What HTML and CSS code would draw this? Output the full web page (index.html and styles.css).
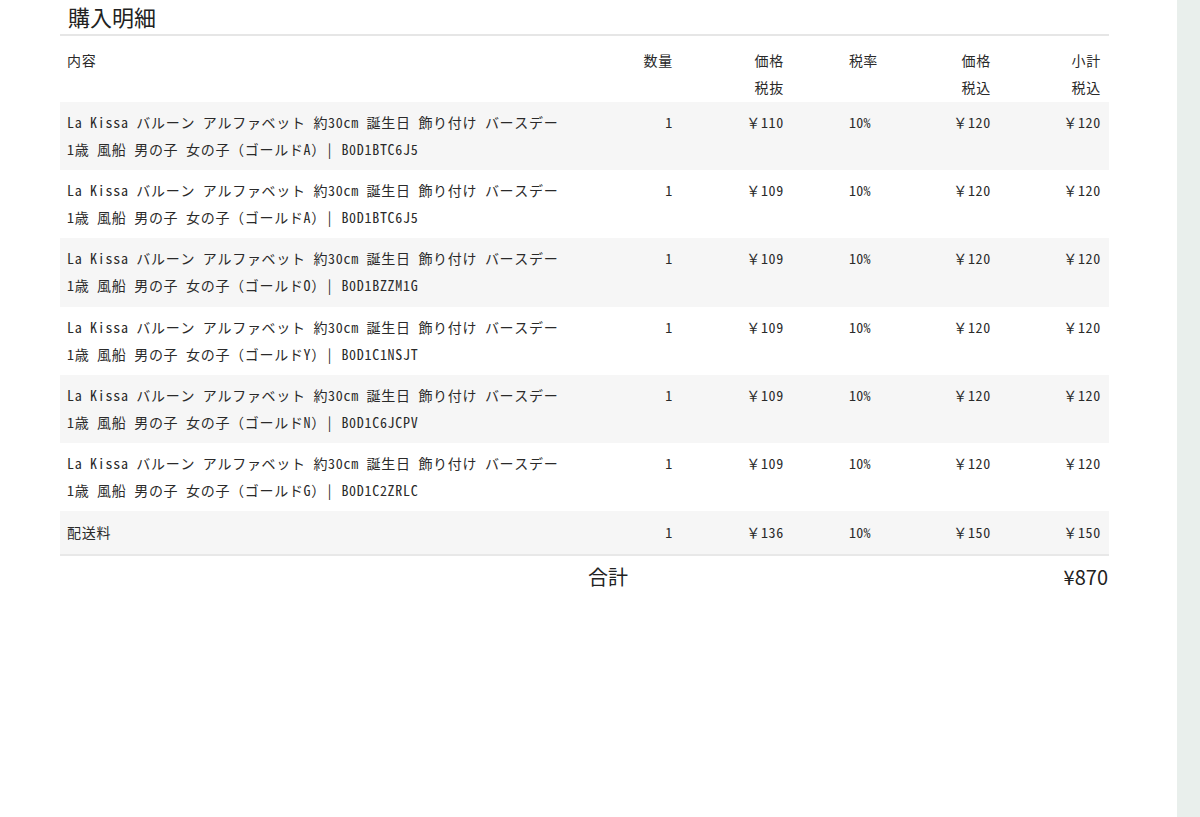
FILE: index.html
```html
<!DOCTYPE html>
<html lang="ja">
<head>
<meta charset="utf-8">
<title>購入明細</title>
<link rel="stylesheet" href="styles.css">
</head>
<body>
<div class="page">
  <main class="content">
    <h2 class="title">購入明細</h2>
    <div class="table">
      <div class="row head">
        <div class="c desc">内容</div>
        <div class="c num">数量</div>
        <div class="c num">価格<br>税抜</div>
        <div class="c rate">税率</div>
        <div class="c num">価格<br>税込</div>
        <div class="c num">小計<br>税込</div>
      </div>
      <div class="row alt">
        <div class="c desc">La Kissa バルーン アルファベット 約30cm 誕生日 飾り付け バースデー<br>1歳 風船 男の子 女の子（ゴールドA）| B0D1BTC6J5</div>
        <div class="c num">1</div><div class="c num">￥110</div><div class="c rate">10%</div><div class="c num">￥120</div><div class="c num">￥120</div>
      </div>
      <div class="row">
        <div class="c desc">La Kissa バルーン アルファベット 約30cm 誕生日 飾り付け バースデー<br>1歳 風船 男の子 女の子（ゴールドA）| B0D1BTC6J5</div>
        <div class="c num">1</div><div class="c num">￥109</div><div class="c rate">10%</div><div class="c num">￥120</div><div class="c num">￥120</div>
      </div>
      <div class="row alt">
        <div class="c desc">La Kissa バルーン アルファベット 約30cm 誕生日 飾り付け バースデー<br>1歳 風船 男の子 女の子（ゴールドO）| B0D1BZZM1G</div>
        <div class="c num">1</div><div class="c num">￥109</div><div class="c rate">10%</div><div class="c num">￥120</div><div class="c num">￥120</div>
      </div>
      <div class="row">
        <div class="c desc">La Kissa バルーン アルファベット 約30cm 誕生日 飾り付け バースデー<br>1歳 風船 男の子 女の子（ゴールドY）| B0D1C1NSJT</div>
        <div class="c num">1</div><div class="c num">￥109</div><div class="c rate">10%</div><div class="c num">￥120</div><div class="c num">￥120</div>
      </div>
      <div class="row alt">
        <div class="c desc">La Kissa バルーン アルファベット 約30cm 誕生日 飾り付け バースデー<br>1歳 風船 男の子 女の子（ゴールドN）| B0D1C6JCPV</div>
        <div class="c num">1</div><div class="c num">￥109</div><div class="c rate">10%</div><div class="c num">￥120</div><div class="c num">￥120</div>
      </div>
      <div class="row">
        <div class="c desc">La Kissa バルーン アルファベット 約30cm 誕生日 飾り付け バースデー<br>1歳 風船 男の子 女の子（ゴールドG）| B0D1C2ZRLC</div>
        <div class="c num">1</div><div class="c num">￥109</div><div class="c rate">10%</div><div class="c num">￥120</div><div class="c num">￥120</div>
      </div>
      <div class="row alt ship">
        <div class="c desc">配送料</div>
        <div class="c num">1</div><div class="c num">￥136</div><div class="c rate">10%</div><div class="c num">￥150</div><div class="c num">￥150</div>
      </div>
    </div>
    <div class="total">
      <div class="total-label">合計</div>
      <div class="total-value">¥870</div>
    </div>
  </main>
  <aside class="side"></aside>
</div>
</body>
</html>
```
FILE: styles.css
```css
* { box-sizing: border-box; }
html, body { margin: 0; padding: 0; background: #fff; }
body { font-family: "Noto Sans CJK JP", sans-serif; color: #2a2a2a; }
.page { display: flex; height: 817px; overflow: hidden; }
.content { flex: 1; padding: 0 68px 0 60px; }
.side { width: 23px; background: #e9efec; }
.title { margin: 0; padding: 1px 0 0 8px; font-size: 22px; font-weight: 400; line-height: 30px; color: #222; border-bottom: 2px solid #e6e6e6; height: 36px; }
.table { font-family: "Noto Sans Mono CJK JP", "Noto Sans CJK JP", monospace; font-size: 14px; letter-spacing: 0.7px; border-bottom: 2px solid #e8e8e8; }
.row { display: grid; grid-template-columns: 1fr 72px 111px 95px 112px 110px; padding: 7px 8px 7.2px 7px; line-height: 27px; }
.row.head { padding-top: 11px; padding-bottom: 0; height: 66px; }
.row.ship { padding-top: 8px; padding-bottom: 8px; }
.alt { background: #f6f6f6; }
.c { white-space: nowrap; }
.num { text-align: right; }
.rate { padding-left: 65px; letter-spacing: 0.3px; }
.total { display: flex; align-items: center; padding: 5px 1px 0 0; line-height: 32px; font-size: 20px; color: #222; }
.total-label { width: 568px; text-align: right; }
.total-value { flex: 1; text-align: right; }
```
